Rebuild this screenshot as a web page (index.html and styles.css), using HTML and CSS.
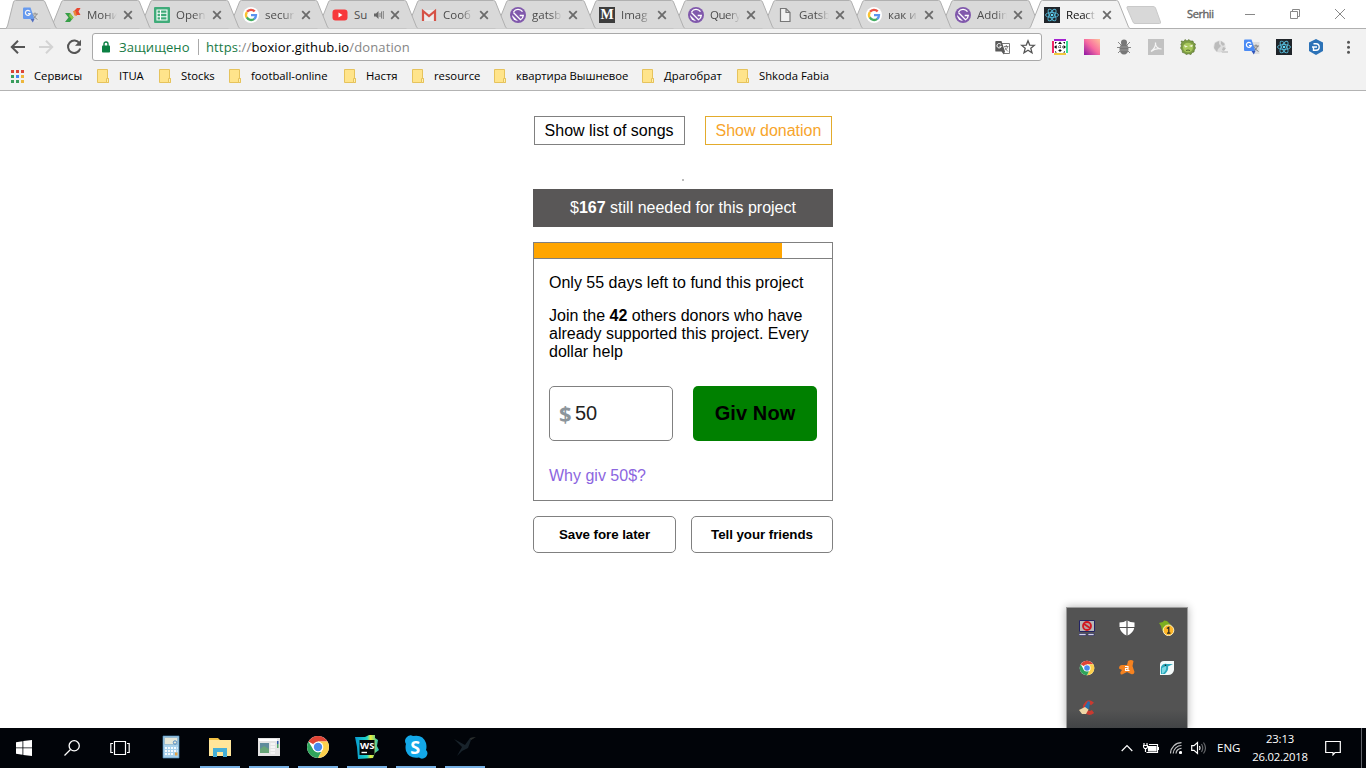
FILE: index.html
```html
<!DOCTYPE html>
<html lang="ru">
<head>
<meta charset="utf-8">
<title>React App</title>
<link rel="stylesheet" href="styles.css">
</head>
<body>
<svg class="defs" width="0" height="0">
<defs>
<linearGradient id="pinkGrad" x1="0" y1="1" x2="1" y2="0"><stop offset="0" stop-color="#8d15a5"/><stop offset=".5" stop-color="#f86ba0"/><stop offset="1" stop-color="#ffc19b"/></linearGradient>
<linearGradient id="wsGrad" x1="0" y1="0" x2="1" y2="0"><stop offset="0" stop-color="#0799d1"/><stop offset=".5" stop-color="#1fd5c8"/><stop offset=".65" stop-color="#e9ee3c"/><stop offset="1" stop-color="#12bcc0"/></linearGradient>
<symbol id="tab" viewBox="0 0 101 29"><path d="M0 28.5L1.500 27L11.500 2Q12 .5 13.500 .5H87.500Q89 .5 89.500 2L99.500 27L101 28.500" stroke="#b0b0b0"/></symbol>
<symbol id="close" viewBox="0 0 10 10"><path d="M1.200 1.200L8.800 8.800M8.800 1.200L1.200 8.800" fill="none" stroke="#6b6b6b" stroke-width="1.800"/></symbol>
<symbol id="google" viewBox="0 0 16 16"><circle cx="8" cy="8" r="8" fill="#fff"/><g fill="none" stroke-width="2.300"><path d="M4 4.800A5 5 0 0 1 11.700 4.400" stroke="#ea5548"/><path d="M3.800 10.700A5 5 0 0 1 4 5" stroke="#fac22f"/><path d="M11.300 11.900A5 5 0 0 1 3.800 10.400" stroke="#45ae62"/><path d="M8 8.200H13A5 5 0 0 1 11.200 12" stroke="#5b93ee"/></g></symbol>
<symbol id="gatsby" viewBox="0 0 16 16"><circle cx="8" cy="8" r="8" fill="#8159ac"/><path d="M2 8L8 14A6 6 0 0 1 2 8Z" fill="#fff"/><path d="M3.400 5.500L10.500 12.800A5.400 5.400 0 0 0 13.300 8.500H9.700M3.500 5A5.400 5.400 0 0 1 12.500 4.700" fill="none" stroke="#fff" stroke-width="1.300"/></symbol>
<symbol id="react" viewBox="0 0 16 16"><path fill="#20252a" d="M0 0H16V16H0Z"/><g fill="none" stroke="#55b9d8" stroke-width=".9"><ellipse cx="8" cy="8" rx="6.500" ry="2.500"/><ellipse cx="8" cy="8" rx="6.500" ry="2.500" transform="rotate(60 8 8)"/><ellipse cx="8" cy="8" rx="6.500" ry="2.500" transform="rotate(120 8 8)"/></g><circle cx="8" cy="8" r="1.300" fill="#61dafb"/></symbol>
<symbol id="translate" viewBox="0 0 16 16"><path fill="#dedede" d="M7 3H15.500V15H10Z"/><path fill="#4b8bf4" d="M1 .5H7.500L11.500 12H1Q0 12 0 11V1.500Q0 .5 1 .5Z"/><path fill="#3254b9" d="M7.500 12H11.500L9.800 15.500Z"/><path d="M7 4.500A2.500 2.500 0 1 0 7.300 6.500H5" fill="none" stroke="#fff" stroke-width="1.200"/><path d="M9.500 7H15M12 5.500V7M13.500 7Q13 10 10.500 11.500M10.500 8Q11.500 11 14.500 12.500" fill="none" stroke="#777" stroke-width=".9"/></symbol>
<symbol id="folder" viewBox="0 0 12 14"><path d="M.5.5H10.500V9.500H11.500V13.500H.5Z" fill="#ffe48b" stroke="#e6c35c"/><path d="M9.500 9.500H11.500V13.500H9.500Z" fill="#fff0b0" stroke="#e6c35c"/></symbol>
<symbol id="chrome" viewBox="0 0 24 24"><circle cx="12" cy="12" r="11" fill="#fff"/><path fill="#df4435" d="M12 12L2.500 6.500A11 11 0 0 1 21.500 6.500H12Z"/><path fill="#fcd04c" d="M12 6.500H21.500A11 11 0 0 1 12 23L17 14Z"/><path fill="#2fa45b" d="M2.500 6.500L7.500 15L15 17L12 23A11 11 0 0 1 2.500 6.500Z"/><circle cx="12" cy="12" r="5.400" fill="#fff"/><circle cx="12" cy="12" r="4.200" fill="#4a89ed"/></symbol>
</defs>
</svg>

<header class="browser">
<div class="tabstrip">
<div class="tab pinned"><svg class="shape" viewBox="0 0 51 29"><path d="M0 28.500L1.500 26L7.500 2Q8 .5 9.500 .5H37Q38.500 .5 39 2L49.500 27L51 28.500" stroke="#b0b0b0"/></svg><div class="tab-body"><svg class="fav faded"><use href="#translate"/></svg></div></div>
<div class="tab z11"><svg class="shape"><use href="#tab"/></svg><div class="tab-body"><svg class="fav" viewBox="0 0 16 16"><path fill="#e8472f" d="M9 4L12 1H15.500L13.500 4.500L15.500 8H11Z"/><path fill="#e98a3b" d="M8 4L9.500 8.500L12 9L10.500 4Z"/><path fill="#379e48" d="M0 6H5L8.500 10.500L5 15H0L3.500 10.500Z"/><path fill="#8cc34a" d="M5 6L8.500 10.500L7 12.500L4 9Z"/></svg><span class="title">Мони</span><svg class="x"><use href="#close"/></svg></div></div>
<div class="tab z10"><svg class="shape"><use href="#tab"/></svg><div class="tab-body"><svg class="fav" viewBox="0 0 16 16"><rect width="16" height="16" rx="1" fill="#3fab79"/><path d="M3 3H13V13H3ZM3 6.300H13M3 9.700H13M6.500 3V13" fill="none" stroke="#fff" stroke-width="1.100"/></svg><span class="title">Open</span><svg class="x"><use href="#close"/></svg></div></div>
<div class="tab z9"><svg class="shape"><use href="#tab"/></svg><div class="tab-body"><svg class="fav"><use href="#google"/></svg><span class="title">secur</span><svg class="x"><use href="#close"/></svg></div></div>
<div class="tab z8"><svg class="shape"><use href="#tab"/></svg><div class="tab-body"><svg class="fav" viewBox="0 0 16 16"><rect x=".5" y="2.500" width="15" height="11" rx="3" fill="#f7383b"/><path d="M6.500 5.500L10.500 8L6.500 10.500Z" fill="#fff"/></svg><span class="title short">Su</span><svg class="sound" viewBox="0 0 10 10"><path fill="#666" d="M0 3.500H2L4.500 1V9L2 6.500H0Z"/><path d="M6 3V7M7.500 1.500V8.500M9.300 1V9" stroke="#777" stroke-width=".9"/></svg><svg class="x"><use href="#close"/></svg></div></div>
<div class="tab z7"><svg class="shape"><use href="#tab"/></svg><div class="tab-body"><svg class="fav" viewBox="0 0 16 16"><path fill="#ececec" d="M2 3H14V14H2Z"/><path d="M2 14V4L8 9L14 4V14" fill="none" stroke="#d65246" stroke-width="2.200"/></svg><span class="title">Сооб</span><svg class="x"><use href="#close"/></svg></div></div>
<div class="tab z6"><svg class="shape"><use href="#tab"/></svg><div class="tab-body"><svg class="fav"><use href="#gatsby"/></svg><span class="title">gatsb</span><svg class="x"><use href="#close"/></svg></div></div>
<div class="tab z5"><svg class="shape"><use href="#tab"/></svg><div class="tab-body"><span class="fav medium">M</span><span class="title">Imag</span><svg class="x"><use href="#close"/></svg></div></div>
<div class="tab z4"><svg class="shape"><use href="#tab"/></svg><div class="tab-body"><svg class="fav"><use href="#gatsby"/></svg><span class="title tight">Query</span><svg class="x"><use href="#close"/></svg></div></div>
<div class="tab z3"><svg class="shape"><use href="#tab"/></svg><div class="tab-body"><svg class="fav" viewBox="0 0 16 16"><path d="M3.500 1.500H9L13 5.500V14.500H3.500ZM9 1.500V5.500H13" fill="#f0f0f0" stroke="#777" stroke-width="1.200"/></svg><span class="title">Gatsb</span><svg class="x"><use href="#close"/></svg></div></div>
<div class="tab z2"><svg class="shape"><use href="#tab"/></svg><div class="tab-body"><svg class="fav"><use href="#google"/></svg><span class="title">как и</span><svg class="x"><use href="#close"/></svg></div></div>
<div class="tab z1"><svg class="shape"><use href="#tab"/></svg><div class="tab-body"><svg class="fav"><use href="#gatsby"/></svg><span class="title">Addin</span><svg class="x"><use href="#close"/></svg></div></div>
<div class="tab active"><svg class="shape"><use href="#tab"/></svg><div class="tab-body"><svg class="fav"><use href="#react"/></svg><span class="title">React</span><svg class="x"><use href="#close"/></svg></div></div>
<svg class="newtab" viewBox="0 0 36 18"><path d="M2 .5H27Q29 .5 29.500 2L34.500 16Q35 17.500 33.500 17.500H9Q7.500 17.500 7 16L1 2Q.5 .5 2 .5Z" fill="#d8d8d8" stroke="#c9c9c9"/></svg>
<div class="window-controls"><span class="user">Serhii</span>
<svg viewBox="0 0 12 12"><path d="M1 6.500H11"/></svg>
<svg viewBox="0 0 12 12"><path d="M1.500 3.500H8.500V10.500H1.500ZM3.500 3.500V1.500H10.500V8.500H8.500"/></svg>
<svg viewBox="0 0 12 12"><path d="M1 1L11 11M11 1L1 11"/></svg></div>
</div>

<div class="toolbar">
<div class="nav">
<svg viewBox="0 0 16 16"><path d="M15 8H2M8 1.800L1.800 8L8 14.200" stroke="#555"/></svg>
<svg viewBox="0 0 16 16"><path d="M1 8H14M8 1.800L14.200 8L8 14.200" stroke="#d3d3d3"/></svg>
<svg viewBox="0 0 16 16"><path d="M13.500 4.500A6.200 6.200 0 1 0 14.200 9.500" stroke="#555"/><path d="M15 .8V6.800H9Z" fill="#555"/></svg>
</div>
<div class="omnibox">
<svg class="lock" viewBox="0 0 8 12"><path d="M2 5V3A2 2 0 0 1 6 3V5" fill="none" stroke="#0b8043" stroke-width="1.400"/><rect y="4.500" width="8" height="7" rx=".8" fill="#0b8043"/></svg>
<span class="secure">Защищено</span><span class="url"><i>https</i><b>://</b>boxior.github.io<b>/donation</b></span>
<svg class="tr" viewBox="0 0 15 15"><path d="M6 3.500H14.500V13.500H9" fill="#fff" stroke="#777"/><path fill="#5a5a5a" d="M1 1H6.500L10 11.500H1Q.3 11.500.3 11V2Q.3 1 1 1ZM6.500 11.500H10L8.700 14.500Z"/><path d="M6 4.500A2.200 2.200 0 1 0 6.300 6.300H4.500" fill="none" stroke="#fff"/><path d="M9 6.500H13.500M11.300 5V6.500M12.700 6.500Q12 9 10.500 10M10 7.500Q11 10 13 11.500" fill="none" stroke="#666" stroke-width=".8"/></svg>
<svg class="star" viewBox="0 0 16 16"><path d="M8 1.800L9.700 6.100L14.300 6.400L10.800 9.300L12 13.800L8 11.300L4 13.800L5.200 9.300L1.700 6.400L6.300 6.100Z" fill="none" stroke="#555" stroke-width="1.300"/></svg>
</div>
<div class="extensions">
<svg viewBox="0 0 16 16"><path fill="#fff" d="M1 1H15V15H1Z"/><path fill="#a421d0" d="M2 0H14V2H2Z"/><path fill="#f02765" d="M0 2H2V14H0Z"/><path fill="#35db92" d="M14 2H16V14H14Z"/><path fill="#f2c83c" d="M2 14H14V16H2Z"/><path d="M8 4V12M4 8H12" stroke="#222" stroke-dasharray="1 1"/><path d="M8 2.500L10 5H6ZM8 13L6 11H10ZM2 8L4.500 6V10ZM14 8L11.500 6V10ZM3 3H5L3 5ZM13 3V5L11 3ZM3 12L5 13.500H3ZM13 12V13.500H11Z" fill="#111"/></svg>
<svg viewBox="0 0 16 16"><path fill="url(#pinkGrad)" d="M0 0H16V16H0Z"/></svg>
<svg viewBox="0 0 16 16"><path d="M2 3L5 6M14 3L11 6M1 8.500H15M2 14L5 11M14 14L11 11" stroke="#888"/><circle cx="8" cy="3.500" r="3" fill="#777"/><ellipse cx="8" cy="10" rx="4.500" ry="5.500" fill="#777"/><path d="M4 8H12M4 11H12" stroke="#aaa" stroke-width=".7"/></svg>
<svg viewBox="0 0 16 16"><path fill="#c2c2c2" d="M0 0H16V16H0Z"/><path d="M3 12.500C6 10 8 7 7.500 3.500C7 7 10 10 13.500 10C10 9 6 10 3 12.500Z" fill="none" stroke="#f5f5f5" stroke-width="1.200"/></svg>
<svg viewBox="0 0 16 16"><path fill="#7e9d43" stroke="#526b2b" stroke-width=".6" d="M1 2L4 2.500L5 .5L7 2L9 .5L10.500 2L13 2L13.500 4L15.500 5L14.700 7L15.500 9L14.300 11L14 13L12 13.500L11 15.500L8.500 14.800L6 15.500L4.500 14L2.500 13.500L2 11L.5 9L1.500 7L.8 5L2 4Z"/><ellipse cx="8" cy="8.500" rx="5" ry="4.800" fill="#a9c85e"/><path fill="#f1f5da" d="M4 6L8 7.500L5 8.500ZM9 7L13 5.500L12 8Z"/><path stroke="#536b2d" d="M6 11.500Q8 10.500 10 11.500"/></svg>
<svg viewBox="0 0 16 16"><circle cx="7.500" cy="7.500" r="6" fill="#dedede"/><path fill="#bcbcbc" d="M3 4L7 2L7 5L9 7L6 10L5 13L2 9ZM9 2L13 5L11 7L9 5ZM11 8L14 9L12 12L10 11Z"/><path fill="#d1d1d1" d="M9 12H16V14H10Z"/></svg>
<svg><use href="#translate"/></svg>
<svg><use href="#react"/></svg>
<svg viewBox="0 0 16 16"><path fill="#2c72b7" d="M8 0L15 3.500V12L8 16L1 12V3.500Z"/><path d="M5.500 4.800H8A3.200 3.200 0 0 1 8 11.200H5.500V8.700M4 8H9" fill="none" stroke="#fff" stroke-width="1.400"/></svg>
<svg viewBox="0 0 16 16"><g fill="#555"><circle cx="8.500" cy="3.200" r="1.500"/><circle cx="8.500" cy="8.200" r="1.500"/><circle cx="8.500" cy="13.200" r="1.500"/></g></svg>
</div>
</div>

<nav class="bookmarks">
<a class="apps"><svg viewBox="0 0 13 13"><g fill="#dc4437"><path d="M0 0H3V3H0ZM5 0H8V3H5ZM10 0H13V3H10Z"/></g><path fill="#3a9d5c" d="M0 5H3V8H0ZM0 10H3V13H0ZM5 10H8V13H5Z"/><path fill="#4285f4" d="M5 5H8V8H5Z"/><path fill="#edb63b" d="M10 5H13V8H10ZM10 10H13V13H10Z"/></svg><span>Сервисы</span></a>
<a class="bm-itua"><svg><use href="#folder"/></svg><span>ITUA</span></a>
<a class="bm-stocks"><svg><use href="#folder"/></svg><span>Stocks</span></a>
<a class="bm-football"><svg><use href="#folder"/></svg><span>football-online</span></a>
<a class="bm-nastya"><svg><use href="#folder"/></svg><span>Настя</span></a>
<a class="bm-resource"><svg><use href="#folder"/></svg><span>resource</span></a>
<a class="bm-flat"><svg><use href="#folder"/></svg><span>квартира Вышневое</span></a>
<a class="bm-drago"><svg><use href="#folder"/></svg><span>Драгобрат</span></a>
<a class="bm-fabia"><svg><use href="#folder"/></svg><span>Shkoda Fabia</span></a>
</nav>
</header>

<main class="page">
<div class="switcher"><button>Show list of songs</button><button class="current">Show donation</button></div>
<div class="speck"></div>
<div class="needed">$<strong>167</strong> still needed for this project</div>
<section class="card">
<div class="progress"><div class="fill"></div></div>
<div class="card-body">
<p>Only 55 days left to fund this project</p>
<p class="join">Join the <strong>42</strong> others donors who have already supported this project. Every dollar help</p>
<div class="give-row"><div class="amount"><span class="currency">$</span><span>50</span></div><button class="give">Giv Now</button></div>
<a class="why">Why giv 50$?</a>
</div>
</section>
<div class="actions"><button class="save">Save fore later</button><button class="tell">Tell your friends</button></div>
</main>

<aside class="tray">
<svg viewBox="0 0 16 16"><path fill="#b8b8b8" stroke="#242463" d="M.5.5H15.500V11.500H.5Z"/><circle cx="8" cy="6" r="4" fill="#b8a0a0" stroke="#d21820" stroke-width="1.800"/><path d="M5 4L11 8" stroke="#d21820" stroke-width="1.800"/><path fill="#d5d5e8" stroke="#242463" stroke-width=".6" d="M0 13.500H7V15.500H0ZM9 13.500H15V15.500H9Z"/></svg>
<svg viewBox="0 0 16 16"><path fill="#fff" d="M8 .3Q11 2.500 15.500 2.500V7Q14.500 13 8 15.800Q1.500 13 .5 7V2.500Q5 2.500 8 .3Z"/><path d="M8 0V16M0 7.500H16" stroke="#525252" stroke-width="1.200"/></svg>
<svg viewBox="0 0 16 16"><path fill="#7cae20" d="M0 3L4 2L5 .5L8 1L12 5L7 14L3 10L2 6Z"/><circle cx="9.500" cy="10.300" r="5.300" fill="#ffb727" stroke="#fff0be"/><path d="M7.800 8.500L9.800 7.300V13M8 13.200H11.500" fill="none" stroke="#222" stroke-width="1.200"/></svg>
<svg><use href="#chrome"/></svg>
<svg viewBox="0 0 16 16"><path fill="#f58220" d="M9 1Q12-1 14.500 1L13.500 6L15.500 12Q15 15 12 14L8 12L3 14.500Q1 15 1.500 12L3 10L0 8.500Q0 5 3 5L8 5Z"/><path d="M6 6.500H9V10.500H6.500V8.500H9M9 10.500H10.500" fill="none" stroke="#fff" stroke-width="1.100"/></svg>
<svg viewBox="0 0 16 16"><path fill="#f4fafa" d="M5 1H15V10Q14 15 9 15H1V5Q1 1 5 1Z"/><path fill="#2ba9bd" d="M2 7Q4 3 8 4L14 4L9 6.500Q10 10 6 14H2Q1.500 10 2 7Z"/><path fill="#7edae5" d="M3 8L7 6Q8 10 4 13.500H3Z"/><circle cx="6.500" cy="5.200" r=".8" fill="#122"/></svg>
<svg viewBox="0 0 16 16"><path d="M13.500 4Q11 1 8 3Q4 7 7 11Q10 14.500 14 11.500" fill="none" stroke="#c93a30" stroke-width="3.800"/><path fill="#276daa" d="M9 1L11 2L10 9L5 8Z"/><path fill="#efd7a5" d="M0 10L6 7L9.500 9.500L7 14L3 14Z"/></svg>
</aside>

<footer class="taskbar">
<div class="system">
<svg viewBox="0 0 16 16"><path fill="#fff" d="M0 2.200L6.500 1.200V7.500H0ZM7.300 1.100L16 0V7.500H7.300ZM0 8.300H6.500V14.700L0 13.800ZM7.300 8.300H16V16L7.300 14.900Z"/></svg>
<svg viewBox="0 0 16 16"><g fill="none" stroke="#fff" stroke-width="1.300"><circle cx="10.200" cy="5.800" r="5.100"/><path d="M6.500 9.500L.5 15.500"/></g></svg>
<svg class="wide" viewBox="0 0 20 16"><path d="M4.500 1.500H15.500V14.500H4.500ZM3 3.500H.8V12.500H3M17 3.500H19.200V12.500H17" fill="none" stroke="#fff" stroke-width="1.200"/></svg>
</div>
<div class="apps-row">
<div class="app"><svg viewBox="0 0 24 24"><path fill="#a8d1ec" stroke="#4c89b9" stroke-width=".7" d="M4 1H20V23H4Z"/><path fill="#e7e8d9" stroke="#739fc0" stroke-width=".5" d="M5.500 2.500H18.500V9.500H5.500Z"/><circle cx="16" cy="7.500" r="1.700" fill="none" stroke="#4b88c2"/><path d="M6 13H18.500M6 16H18.500M6 19H14" stroke="#f5fbff" stroke-width="2" stroke-dasharray="2 1"/><path d="M16 19H18.500" stroke="#e5a345" stroke-width="3"/></svg></div>
<div class="app open"><svg viewBox="0 0 24 24"><path fill="#f2c144" d="M1 3H10L12 5H23V8H1Z"/><path fill="#ffe69a" d="M1 5H23V21H1Z"/><path fill="#45afd7" d="M5 22V13H19V22H15V17H9V22Z"/></svg></div>
<div class="app open"><svg viewBox="0 0 24 24"><path fill="#e4e4e4" d="M1 3H23V21H1Z"/><path fill="#fff" d="M2 4H20V6H2Z"/><path fill="#5f8c9c" d="M3 8H12V18H3Z"/><path fill="#67a477" d="M3 14L7 11L12 14V18H3Z"/><path d="M13.500 9H18M13.500 12H18M13.500 15H18M13.500 18H18" stroke="#fafafa" stroke-width="1.500"/><path fill="#2b58ae" d="M20 6H21.500V9H20Z"/><path fill="#50a765" d="M20 9H21.500V13H20Z"/></svg></div>
<div class="app open"><svg><use href="#chrome"/></svg></div>
<div class="app open"><svg viewBox="0 0 24 24"><path fill="url(#wsGrad)" d="M0 2L10 2L14 0H20V3L23 5L22 11L24 15L20 18L18 23L3 24L2 12Z"/><path fill="#050708" d="M4.500 5H19.500V20H4.500Z"/><path d="M6.500 17.500H12" stroke="#fff" stroke-width="1.400"/><text class="ws" x="5" y="13.500">WS</text></svg></div>
<div class="app open"><svg viewBox="0 0 24 24"><path fill="#13a8e8" d="M2 3Q5-1 9 1Q19-1 22 8Q23 12 22 15Q25 18 22 22Q18 25 15 22.500Q5 24 2 16Q1 12 2 9Q0 6 2 3Z"/><text class="skype" x="6.300" y="18.500">S</text></svg></div>
<div class="app open"><svg viewBox="0 0 24 24"><path fill="#18232b" d="M1 4L12 10L17 3L22 2L18 5L15 13L9 16L4 21L9 12Z"/><path fill="#2c2f2c" d="M17 3L23 2L18 5Z"/></svg></div>
</div>
<div class="status">
<svg class="chev" viewBox="0 0 12 8"><path d="M.7 7L6 1.500L11.300 7"/></svg>
<svg class="battery" viewBox="0 0 16 12"><path d="M1 1V3M4 1V3M.5 3.500H4.500V5L3.500 6.500H1.500L.5 5ZM2.500 6.500V10M6 2.500H14.500V10.500H3.500"/><path d="M5.500 4.500H13V8.800H5.500Z" fill="#fff"/><path d="M15.500 5V8"/></svg>
<svg class="wifi" viewBox="0 0 12 12"><path d="M.5 11.500A11 11 0 0 1 11.500 .7M3.200 11.500A8.300 8.300 0 0 1 11.500 3.500M6 11.500A5.500 5.500 0 0 1 11.500 6.300" opacity=".75"/><circle cx="10.500" cy="10.500" r="1" fill="#fff"/></svg>
<svg class="volume" viewBox="0 0 16 14"><path d="M.7 4.700H3L6.500 1.500V12.500L3 9.300H.7ZM8.500 5Q9.500 7 8.500 9"/><path d="M10.500 3Q13 7 10.500 11M12.500 1.500Q16.500 7 12.500 12.500" opacity=".4"/></svg>
<span class="lang">ENG</span>
<div class="clock"><span>23:13</span><span>26.02.2018</span></div>
<svg class="note" viewBox="0 0 16 16"><path d="M.7 1.500H15.300V12.500H10L8 14.800V12.500H.7Z"/></svg>
<i class="desktop"></i>
</div>
</footer>
</body>
</html>
```

FILE: styles.css
```css
* { box-sizing: border-box; }
html, body { margin: 0; height: 100%; overflow: hidden; }
body { display: flex; flex-direction: column; background: #fff; font-family: "Liberation Sans", Arial, sans-serif; color: #000; }
svg { display: block; flex: none; }
.defs { position: absolute; }
button { font: inherit; color: inherit; background: none; padding: 0; margin: 0; }
.browser { height: 91px; flex: none; background: #f2f2f2; border-bottom: 1px solid #b3b3b3; font-family: "Open Sans", "Noto Sans", sans-serif; }

.tabstrip { height: 29px; display: flex; padding-left: 6px; background: linear-gradient(#fff 28px, #b0b0b0 28px); }
.tab { flex: none; width: 101px; height: 29px; margin-right: -12px; display: grid; position: relative; }
.tab > * { grid-area: 1 / 1; }
.tab.pinned { width: 51px; margin-right: -7px; z-index: 12; }
.z11 { z-index: 11; } .z10 { z-index: 10; } .z9 { z-index: 9; } .z8 { z-index: 8; } .z7 { z-index: 7; } .z6 { z-index: 6; }
.z5 { z-index: 5; } .z4 { z-index: 4; } .z3 { z-index: 3; } .z2 { z-index: 2; } .z1 { z-index: 1; }
.shape { width: 100%; height: 29px; fill: #d9d9d9; }
.tab.active { z-index: 20; margin-right: 0; }
.active .shape { fill: #f2f2f2; }
.tab-body { display: flex; align-items: center; height: 29px; padding: 0 0 0 15px; }
.pinned .tab-body { padding-left: 17px; }
.fav { width: 16px; height: 16px; flex: none; }
.faded { opacity: .8; }
.medium { background: #3d3d3d; color: #fff; font: bold 14px/16px "Liberation Serif", serif; text-align: center; }
.title { width: 30px; margin-left: 6px; overflow: hidden; white-space: nowrap; font-size: 11.5px; line-height: 16px; color: #4c4c4c; -webkit-mask-image: linear-gradient(90deg, #000 60%, transparent); mask-image: linear-gradient(90deg, #000 60%, transparent); }
.tight { letter-spacing: -.5px; }
.active .title { color: #111; letter-spacing: -.2px; }
.title.short { width: 15px; -webkit-mask-image: none; mask-image: none; }
.sound { width: 10px; height: 10px; margin-left: 5px; }
.x { width: 10px; height: 10px; margin-left: 6px; }
.newtab { width: 36px; height: 18px; margin: 6px 0 0 -4px; }
.window-controls { flex: 1; display: flex; align-items: center; height: 27px; padding-left: 25px; }
.user { width: 57px; font-size: 11px; color: #666; letter-spacing: -.4px; -webkit-text-stroke: .4px #666; }
.window-controls svg { width: 12px; height: 12px; margin-right: 33px; fill: none; stroke: #888; }
.window-controls svg:last-child { margin-right: 0; }

.toolbar { height: 32px; margin-top: 2px; display: flex; align-items: center; }
.nav { display: flex; gap: 12px; width: 92px; padding-left: 10px; }
.nav svg { width: 16px; height: 16px; fill: none; stroke-width: 2; }
.omnibox { width: 950px; height: 28px; display: flex; align-items: center; border: 1px solid #a9a9a9; border-radius: 3px; background: #fff; padding-left: 9px; font-size: 13px; white-space: nowrap; }
.lock { width: 8px; height: 12px; }
.secure { width: 80px; margin-left: 9px; line-height: 16px; color: #187a45; letter-spacing: .1px; border-right: 1px solid #aaa; }
.url { flex: 1; margin-left: 7px; color: #000; letter-spacing: .13px; }
.url i { font-style: normal; color: #187a45; }
.url b { font-weight: 400; color: #858585; }
.tr { width: 15px; height: 15px; margin-right: 10px; }
.star { width: 16px; height: 16px; margin-right: 5px; }
.extensions { display: flex; gap: 16px; padding-left: 10px; }
.extensions svg { width: 16px; height: 16px; fill: none; }

.bookmarks { display: flex; height: 27px; align-items: center; padding: 0 0 1px 11px; font-size: 11.3px; line-height: 15px; white-space: nowrap; }
.bookmarks a { display: flex; align-items: center; gap: 10px; flex: none; }
.bookmarks span { margin-bottom: 2px; }
.bookmarks svg { width: 12px; height: 14px; }
.apps { width: 86px; }
.bookmarks .apps svg { width: 13px; height: 13px; }
.bm-itua { width: 62px; } .bm-stocks { width: 70px; } .bm-football { width: 115px; } .bm-nastya { width: 68px; }
.bm-resource { width: 82px; } .bm-flat { width: 148px; letter-spacing: -.06px; } .bm-drago { width: 95px; }

.page { flex: 1; width: 300px; margin: 0 auto; padding-top: 25px; font-size: 16px; line-height: 18px; }
.switcher { display: flex; justify-content: center; gap: 20px; }
.switcher button { height: 29px; padding: 0 10px; border: 1px solid #808080; white-space: nowrap; }
.switcher .current { color: #f7a52b; border-color: #e3ab2c; }
.speck { width: 2px; height: 2px; margin: 34px auto 8px; background: #bbb; }
.needed { height: 38px; line-height: 37px; text-align: center; color: #fff; background: #595757; }
.card { height: 259px; margin-top: 15px; border: 1px solid #808080; }
.progress { height: 16px; border-bottom: 1px solid #808080; }
.fill { width: 248px; height: 15px; background: #ffa500; }
.card-body { padding: 15px; }
.card-body p { margin: 0; }
.card-body .join { margin-top: 15px; }
.give-row { display: flex; gap: 20px; margin: 25px 0 26px; }
.amount, .give { width: 124px; height: 55px; border-radius: 5px; padding-bottom: 2px; }
.amount { display: flex; align-items: center; padding-left: 9px; border: 1px solid #808080; font-size: 20px; color: #222; }
.currency { width: 16px; font: bold 22px/24px "Open Sans", sans-serif; color: #8c959b; }
.give { border: 0; background: #008000; font-size: 20px; font-weight: bold; letter-spacing: .1px; }
.why { color: #8c66e0; }
.actions { display: flex; gap: 15px; margin-top: 15px; }
.actions button { height: 37px; border: 1px solid #808080; border-radius: 5px; font-size: 13.333px; font-weight: bold; letter-spacing: -.05px; }
.save { width: 143px; }
.tell { width: 142px; }

.tray { position: absolute; left: 1066px; top: 607px; width: 122px; height: 121px; padding: 12px; display: grid; grid-template-columns: repeat(3, 16px); grid-auto-rows: 16px; gap: 24px; border: 1px solid #9b9b9b; border-bottom: 0; background: linear-gradient(#535353 85%, #424446); box-shadow: 0 0 8px rgba(0,0,0,.3); }
.tray svg { width: 16px; height: 16px; }

.taskbar { height: 40px; flex: none; position: relative; display: flex; align-items: center; background: #010409; color: #fff; font-family: "Open Sans", "Noto Sans", sans-serif; font-size: 12px; }
.system { width: 151px; display: flex; align-items: center; gap: 32px; padding-left: 16px; }
.system svg { width: 16px; height: 16px; }
.system .wide { width: 20px; margin-left: -2px; }
.apps-row { display: flex; gap: 9px; height: 40px; }
.app { width: 40px; height: 40px; display: flex; align-items: center; justify-content: center; border-bottom: 2px solid transparent; }
.app.open { border-color: #76b0e4; }
.app svg { width: 24px; height: 24px; }
.ws { font: bold 9.500px "Open Sans", sans-serif; fill: #fff; }
.skype { font: bold 18px "Open Sans", sans-serif; fill: #fff; }
.status { flex: 1; display: flex; align-items: center; height: 40px; justify-content: flex-end; }
.status svg { fill: none; stroke: #fff; stroke-width: 1.200; }
.chev { width: 12px; height: 8px; margin-right: 10px; }
.battery { width: 16px; height: 12px; margin-right: 11px; }
.wifi { width: 12px; height: 12px; margin-right: 9px; }
.volume { width: 16px; height: 14px; margin-right: 10px; }
.lang { width: 24px; font-size: 11.500px; margin-bottom: 1px; }
.clock { width: 78px; display: flex; flex-direction: column; align-items: center; line-height: 18px; font-size: 11.300px; letter-spacing: -.2px; margin-bottom: 1px; }
.note { width: 16px; height: 16px; margin: 0 20px 0 6px; }
.desktop { width: 1px; height: 40px; margin-right: 4px; background: #60636a; }
```
